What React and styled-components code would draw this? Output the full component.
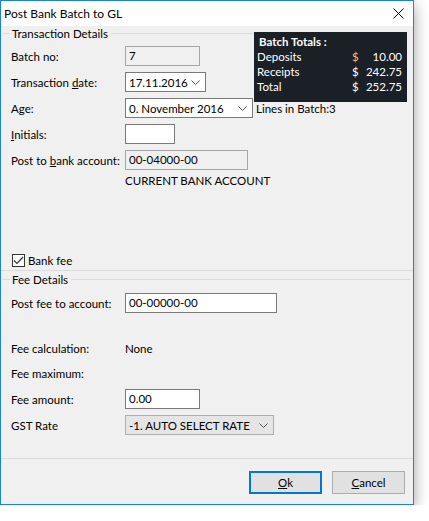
import React from "react";
import styled, { createGlobalStyle } from "styled-components";

const Global = createGlobalStyle`
  html, body { margin: 0; padding: 0; background: #ffffff; }
  body { font-family: Lato, "Noto Sans", sans-serif; font-size: 11.5px; color: #000; }
  * { box-sizing: border-box; }
`;

const Window = styled.div`
  width: 414px;
  height: 505px;
  border: 1px solid #1c84d8;
  background: #f0f0f0;
  display: flex;
  flex-direction: column;
  box-shadow: 0 5px 14px rgba(0, 0, 0, 0.38);
`;

const TitleBar = styled.div`
  height: 25px;
  flex-shrink: 0;
  background: #fff;
  display: flex;
  align-items: center;
  justify-content: space-between;
  padding: 0 0 0 3px;
`;

const Title = styled.div`
  font-size: 12px;
  line-height: 25px;
`;

const CloseBtn = styled.div`
  width: 30px;
  height: 25px;
  display: flex;
  align-items: center;
  justify-content: center;
`;

const Body = styled.div`
  flex: 1;
  display: flex;
  flex-direction: column;
`;

const TopSection = styled.div`
  display: flex;
`;

const LeftCol = styled.div`
  width: 253px;
  display: flex;
  flex-direction: column;
`;

const RightCol = styled.div`
  padding-top: 6px;
  width: 153px;
  display: flex;
  flex-direction: column;
`;

const GroupHeader = styled.div`
  display: flex;
  align-items: center;
  height: 14px;
  flex-shrink: 0;
  margin-top: ${(p) => p.$mt || 0}px;
  padding-left: 1px;
  &::before {
    content: "";
    width: 8px;
    height: 1px;
    background: #dcdcdc;
    margin-right: 2px;
  }
  &::after {
    content: "";
    flex: 1;
    height: 1px;
    background: #dcdcdc;
    margin-left: 3px;
    margin-right: ${(p) => p.$mr || 0}px;
  }
`;

const Row = styled.div`
  display: flex;
  align-items: center;
  flex-shrink: 0;
  height: ${(p) => p.$h || 20}px;
  margin-top: ${(p) => p.$mt || 0}px;
  padding-left: 10px;
`;

const Label = styled.div`
  width: 114px;
  flex-shrink: 0;
  white-space: nowrap;
`;

const Value = styled.div`
  white-space: nowrap;
`;

const TextBox = styled.div`
  width: ${(p) => p.$w}px;
  height: 20px;
  border: 1px solid ${(p) => (p.$disabled ? "#a6a6a6" : "#7a7a7a")};
  background: ${(p) => (p.$disabled ? "#f0f0f0" : "#fff")};
  padding: 0 3px;
  line-height: 18px;
  white-space: nowrap;
  overflow: hidden;
`;

const Select = styled.div`
  width: ${(p) => p.$w}px;
  height: 20px;
  border: 1px solid ${(p) => (p.$disabled ? "#adadad" : "#7a7a7a")};
  background: ${(p) => (p.$disabled ? "#e5e5e5" : "#fff")};
  display: flex;
  align-items: center;
  justify-content: space-between;
  padding: 0 5px 0 3px;
  white-space: nowrap;
`;

const Sub = styled.div`
  padding-left: 124px;
  margin-top: 4px;
  line-height: 14px;
  white-space: nowrap;
`;

const TotalsPanel = styled.div`
  height: 70px;
  background: #1b1f26;
  color: #fff;
  padding: 2px 5px 0 3px;
  display: flex;
  flex-direction: column;
`;

const TotalsTitle = styled.div`
  font-weight: 700;
  line-height: 15px;
  padding-left: 2px;
`;

const TotalsRow = styled.div`
  display: grid;
  grid-template-columns: 1fr 12px 38px;
  line-height: 15px;
`;

const Dollar = styled.span`
  color: ${(p) => p.$c || "#fff"};
`;

const Amount = styled.span`
  text-align: right;
`;

const LinesInfo = styled.div`
  padding-left: 2px;
  line-height: 14px;
  white-space: nowrap;
`;

const CheckRow = styled.label`
  display: flex;
  align-items: center;
  flex-shrink: 0;
  gap: 3px;
  margin-top: 65px;
  padding-left: 11px;
  height: 14px;
`;

const CheckBox = styled.span`
  width: 13px;
  height: 13px;
  border: 1px solid #333;
  background: #fff;
  display: flex;
  align-items: center;
  justify-content: center;
`;

const Separator = styled.div`
  height: 1px;
  flex-shrink: 0;
  background: #dcdcdc;
  margin-top: ${(p) => p.$mt || 0}px;
`;

const Spacer = styled.div`
  flex: 1;
`;

const Footer = styled.div`
  height: 45px;
  flex-shrink: 0;
  display: flex;
  justify-content: flex-end;
  align-items: flex-start;
  padding: 12px 8px 0 0;
  gap: 10px;
`;

const Button = styled.div`
  width: 73px;
  height: 23px;
  background: #e1e1e1;
  border: ${(p) => (p.$default ? "2px solid #0078d7" : "1px solid #adadad")};
  display: flex;
  align-items: center;
  justify-content: center;
`;

const U = styled.span`
  text-decoration: underline;
`;

const Chevron = () => (
  <svg width="9" height="5" viewBox="0 0 9 5">
    <path d="M0.5 0.5 L4.5 4.5 L8.5 0.5" fill="none" stroke="#555" strokeWidth="1" />
  </svg>
);

export default function App() {
  return (
    <>
      <Global />
      <Window>
        <TitleBar>
          <Title>Post Bank Batch to GL</Title>
          <CloseBtn>
            <svg width="11" height="11" viewBox="0 0 11 11">
              <path d="M0.5 0.5 L10.5 10.5 M10.5 0.5 L0.5 10.5" stroke="#000" strokeWidth="1" />
            </svg>
          </CloseBtn>
        </TitleBar>
        <Body>
          <TopSection>
            <LeftCol>
              <GroupHeader>Transaction Details</GroupHeader>
              <Row $mt={6}>
                <Label>Batch no:</Label>
                <TextBox $w={75} $disabled>7</TextBox>
              </Row>
              <Row $mt={6}>
                <Label>Transaction <U>d</U>ate:</Label>
                <Select $w={81}>
                  <span>17.11.2016</span>
                  <Chevron />
                </Select>
              </Row>
              <Row $mt={6}>
                <Label>Age:</Label>
                <Select $w={128}>
                  <span>0. November 2016</span>
                  <Chevron />
                </Select>
              </Row>
              <Row $mt={6}>
                <Label><U>I</U>nitials:</Label>
                <TextBox $w={50} />
              </Row>
              <Row $mt={6}>
                <Label>Post to <U>b</U>ank account:</Label>
                <TextBox $w={123} $disabled>00-04000-00</TextBox>
              </Row>
              <Sub>CURRENT BANK ACCOUNT</Sub>
            </LeftCol>
            <RightCol>
              <TotalsPanel>
                <TotalsTitle>Batch Totals :</TotalsTitle>
                <TotalsRow>
                  <span>Deposits</span>
                  <Dollar $c="#f5bf72">$</Dollar>
                  <Amount>10.00</Amount>
                </TotalsRow>
                <TotalsRow>
                  <span>Receipts</span>
                  <Dollar>$</Dollar>
                  <Amount>242.75</Amount>
                </TotalsRow>
                <TotalsRow>
                  <span>Total</span>
                  <Dollar>$</Dollar>
                  <Amount>252.75</Amount>
                </TotalsRow>
              </TotalsPanel>
              <LinesInfo>Lines in Batch:3</LinesInfo>
            </RightCol>
          </TopSection>
          <CheckRow>
            <CheckBox>
              <svg width="11" height="9" viewBox="0 0 11 9">
                <path d="M1 4.5 L4 7.5 L10 1" fill="none" stroke="#333" strokeWidth="1.2" />
              </svg>
            </CheckBox>
            <span>Bank fee</span>
          </CheckRow>
          <Separator $mt={3} />
          <GroupHeader $mt={1} $mr={3}>Fee Details</GroupHeader>
          <Row $mt={7}>
            <Label>Post fee to account:</Label>
            <TextBox $w={152}>00-00000-00</TextBox>
          </Row>
          <Row $mt={24} $h={22}>
            <Label>Fee calculation:</Label>
            <Value>None</Value>
          </Row>
          <Row $mt={3} $h={22}>
            <Label>Fee maximum:</Label>
          </Row>
          <Row $mt={5}>
            <Label>Fee amount:</Label>
            <TextBox $w={75}>0.00</TextBox>
          </Row>
          <Row $mt={6}>
            <Label>GST Rate</Label>
            <Select $w={149} $disabled>
              <span>-1. AUTO SELECT RATE</span>
              <Chevron />
            </Select>
          </Row>
          <Spacer />
          <Separator />
          <Footer>
            <Button $default><span><U>O</U>k</span></Button>
            <Button><span><U>C</U>ancel</span></Button>
          </Footer>
        </Body>
      </Window>
    </>
  );
}
